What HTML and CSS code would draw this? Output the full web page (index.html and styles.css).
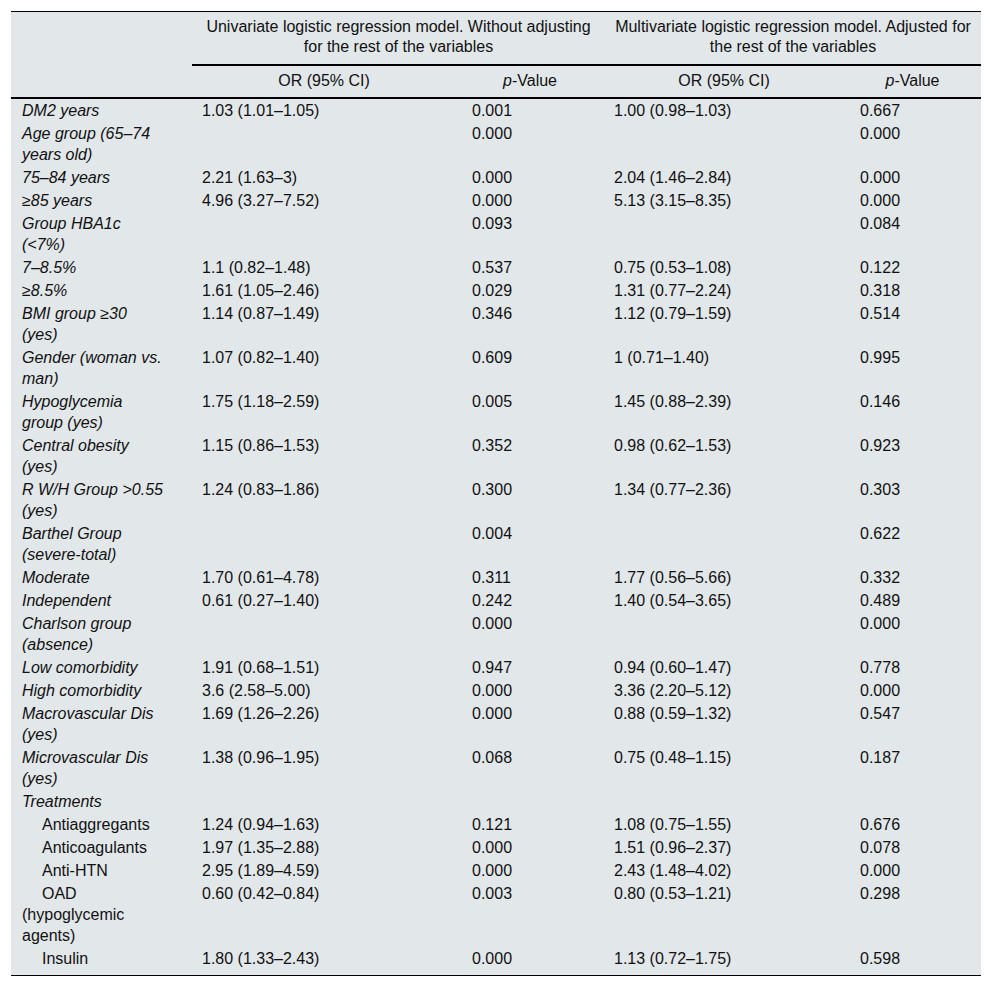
FILE: index.html
```html
<!DOCTYPE html>
<html lang="en">
<head>
<meta charset="utf-8">
<title>Logistic regression models</title>
<link rel="stylesheet" href="styles.css">
</head>
<body>
<div class="page">
<table class="results">
  <colgroup>
    <col class="c-var">
    <col class="c-or1">
    <col class="c-p1">
    <col class="c-or2">
    <col class="c-p2">
  </colgroup>
  <thead>
    <tr class="group-row">
      <th class="blank"></th>
      <th colspan="2" class="group">Univariate logistic regression model. Without adjusting for the rest of the variables</th>
      <th colspan="2" class="group">Multivariate logistic regression model. Adjusted for the rest of the variables</th>
    </tr>
    <tr class="sub-row">
      <th class="blank"></th>
      <th>OR (95% CI)</th>
      <th><i>p</i>-Value</th>
      <th>OR (95% CI)</th>
      <th><i>p</i>-Value</th>
    </tr>
  </thead>
  <tbody>
    <tr><td class="var">DM2 years</td><td>1.03 (1.01–1.05)</td><td>0.001</td><td>1.00 (0.98–1.03)</td><td>0.667</td></tr>
    <tr><td class="var">Age group (65–74 years old)</td><td></td><td>0.000</td><td></td><td>0.000</td></tr>
    <tr><td class="var">75–84 years</td><td>2.21 (1.63–3)</td><td>0.000</td><td>2.04 (1.46–2.84)</td><td>0.000</td></tr>
    <tr><td class="var">≥85 years</td><td>4.96 (3.27–7.52)</td><td>0.000</td><td>5.13 (3.15–8.35)</td><td>0.000</td></tr>
    <tr><td class="var">Group HBA1c (&lt;7%)</td><td></td><td>0.093</td><td></td><td>0.084</td></tr>
    <tr><td class="var">7–8.5%</td><td>1.1 (0.82–1.48)</td><td>0.537</td><td>0.75 (0.53–1.08)</td><td>0.122</td></tr>
    <tr><td class="var">≥8.5%</td><td>1.61 (1.05–2.46)</td><td>0.029</td><td>1.31 (0.77–2.24)</td><td>0.318</td></tr>
    <tr><td class="var">BMI group ≥30 (yes)</td><td>1.14 (0.87–1.49)</td><td>0.346</td><td>1.12 (0.79–1.59)</td><td>0.514</td></tr>
    <tr><td class="var">Gender (woman vs. man)</td><td>1.07 (0.82–1.40)</td><td>0.609</td><td>1 (0.71–1.40)</td><td>0.995</td></tr>
    <tr><td class="var">Hypoglycemia group (yes)</td><td>1.75 (1.18–2.59)</td><td>0.005</td><td>1.45 (0.88–2.39)</td><td>0.146</td></tr>
    <tr><td class="var">Central obesity (yes)</td><td>1.15 (0.86–1.53)</td><td>0.352</td><td>0.98 (0.62–1.53)</td><td>0.923</td></tr>
    <tr><td class="var">R W/H Group &gt;0.55 (yes)</td><td>1.24 (0.83–1.86)</td><td>0.300</td><td>1.34 (0.77–2.36)</td><td>0.303</td></tr>
    <tr><td class="var">Barthel Group (severe-total)</td><td></td><td>0.004</td><td></td><td>0.622</td></tr>
    <tr><td class="var">Moderate</td><td>1.70 (0.61–4.78)</td><td>0.311</td><td>1.77 (0.56–5.66)</td><td>0.332</td></tr>
    <tr><td class="var">Independent</td><td>0.61 (0.27–1.40)</td><td>0.242</td><td>1.40 (0.54–3.65)</td><td>0.489</td></tr>
    <tr><td class="var">Charlson group (absence)</td><td></td><td>0.000</td><td></td><td>0.000</td></tr>
    <tr><td class="var">Low comorbidity</td><td>1.91 (0.68–1.51)</td><td>0.947</td><td>0.94 (0.60–1.47)</td><td>0.778</td></tr>
    <tr><td class="var">High comorbidity</td><td>3.6 (2.58–5.00)</td><td>0.000</td><td>3.36 (2.20–5.12)</td><td>0.000</td></tr>
    <tr><td class="var">Macrovascular Dis (yes)</td><td>1.69 (1.26–2.26)</td><td>0.000</td><td>0.88 (0.59–1.32)</td><td>0.547</td></tr>
    <tr><td class="var">Microvascular Dis (yes)</td><td>1.38 (0.96–1.95)</td><td>0.068</td><td>0.75 (0.48–1.15)</td><td>0.187</td></tr>
    <tr><td class="var">Treatments</td><td></td><td></td><td></td><td></td></tr>
    <tr><td class="sub">Antiaggregants</td><td>1.24 (0.94–1.63)</td><td>0.121</td><td>1.08 (0.75–1.55)</td><td>0.676</td></tr>
    <tr><td class="sub">Anticoagulants</td><td>1.97 (1.35–2.88)</td><td>0.000</td><td>1.51 (0.96–2.37)</td><td>0.078</td></tr>
    <tr><td class="sub">Anti-HTN</td><td>2.95 (1.89–4.59)</td><td>0.000</td><td>2.43 (1.48–4.02)</td><td>0.000</td></tr>
    <tr><td class="sub">OAD (hypoglycemic agents)</td><td>0.60 (0.42–0.84)</td><td>0.003</td><td>0.80 (0.53–1.21)</td><td>0.298</td></tr>
    <tr class="last"><td class="sub">Insulin</td><td>1.80 (1.33–2.43)</td><td>0.000</td><td>1.13 (0.72–1.75)</td><td>0.598</td></tr>
  </tbody>
</table>
</div>
</body>
</html>
```

FILE: styles.css
```css
html, body {
  margin: 0;
  padding: 0;
  background: #ffffff;
}

.page {
  padding: 11px 11px 0 11px;
}

.results {
  width: 970px;
  table-layout: fixed;
  border-collapse: collapse;
  background: #e2e7ea;
  font-family: "Liberation Sans", Arial, sans-serif;
  font-size: 16px;
  line-height: 21px;
  color: #111;
  border-top: 1px solid #000;
  border-bottom: 1px solid #000;
}

.c-var { width: 181px; }
.c-or1 { width: 270px; }
.c-p1  { width: 142px; }
.c-or2 { width: 246px; }
.c-p2  { width: 131px; }

.results th {
  font-weight: normal;
  text-align: center;
  vertical-align: top;
  line-height: 20px;
}

.results .group-row th {
  padding: 5px 8px 7px 9px;
}

.results .group-row th.group {
  border-bottom: 2px solid #000;
}

.results .sub-row th {
  padding: 5px 16px 6px 10px;
  border-bottom: 2px solid #000;
}

.results td {
  vertical-align: top;
  text-align: left;
  padding: 1px 16px 1px 10px;
}

.results td.var {
  font-style: italic;
  padding: 1px 28px 1px 11px;
}

.results td.sub {
  padding: 1px 28px 1px 11px;
  text-indent: 20px;
}

.results tr.last td {
  padding-bottom: 6px;
}
```
